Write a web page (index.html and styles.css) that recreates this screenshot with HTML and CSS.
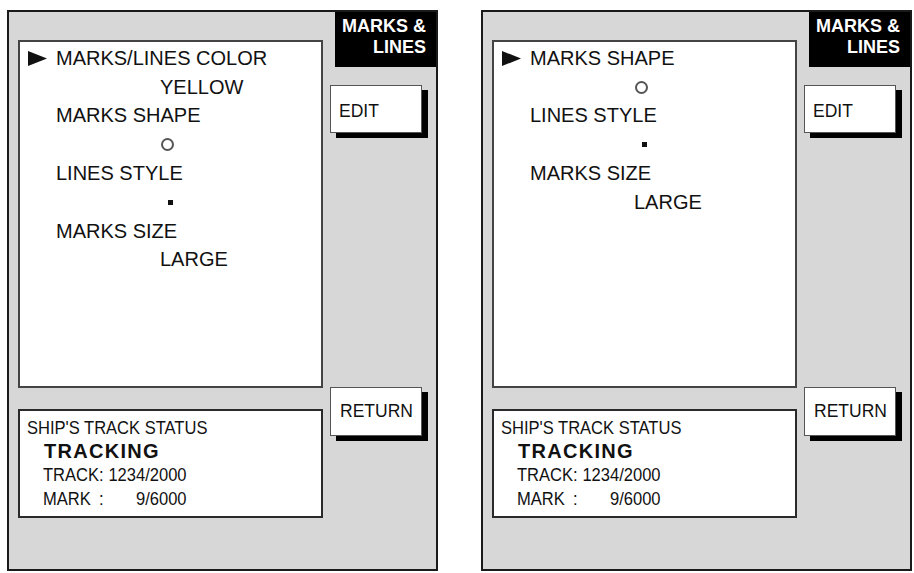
FILE: index.html
```html
<!DOCTYPE html>
<html lang="en">
<head>
  <meta charset="UTF-8">
  <title>Marks &amp; Lines</title>
  <link rel="stylesheet" href="styles.css">
</head>
<body>
  <div class="screens">

    <section class="panel">
      <div class="main">
        <div class="menu">
          <div class="row current">
            <span class="mark"><svg width="19" height="15" viewBox="0 0 19 15"><polygon points="0,0 19,7.5 0,15" fill="#111"/></svg></span>
            MARKS/LINES COLOR
          </div>
          <div class="row value">YELLOW</div>
          <div class="row">MARKS SHAPE</div>
          <div class="row value-ring"><span class="ring"></span></div>
          <div class="row">LINES STYLE</div>
          <div class="row value-dot"><span class="dot"></span></div>
          <div class="row">MARKS SIZE</div>
          <div class="row value">LARGE</div>
        </div>
        <div class="status">
          <div class="status-title">SHIP'S TRACK STATUS</div>
          <div class="status-state">TRACKING</div>
          <div class="counts">
            <span>TRACK</span><span>:</span><span class="num">1234/2000</span>
            <span>MARK</span><span>:</span><span class="num">9/6000</span>
          </div>
        </div>
      </div>
      <div class="side">
        <div class="title">MARKS &amp;<br>LINES</div>
        <div class="key edit">EDIT</div>
        <div class="key return">RETURN</div>
      </div>
    </section>

    <section class="panel">
      <div class="main">
        <div class="menu">
          <div class="row current">
            <span class="mark"><svg width="19" height="15" viewBox="0 0 19 15"><polygon points="0,0 19,7.5 0,15" fill="#111"/></svg></span>
            MARKS SHAPE
          </div>
          <div class="row value-ring"><span class="ring"></span></div>
          <div class="row">LINES STYLE</div>
          <div class="row value-dot"><span class="dot"></span></div>
          <div class="row">MARKS SIZE</div>
          <div class="row value">LARGE</div>
        </div>
        <div class="status">
          <div class="status-title">SHIP'S TRACK STATUS</div>
          <div class="status-state">TRACKING</div>
          <div class="counts">
            <span>TRACK</span><span>:</span><span class="num">1234/2000</span>
            <span>MARK</span><span>:</span><span class="num">9/6000</span>
          </div>
        </div>
      </div>
      <div class="side">
        <div class="title">MARKS &amp;<br>LINES</div>
        <div class="key edit">EDIT</div>
        <div class="key return">RETURN</div>
      </div>
    </section>

  </div>
</body>
</html>
```

FILE: styles.css
```css
body {
  margin: 0;
  background-color: #fff;
  font-family: 'Liberation Sans', Arial, sans-serif;
  color: #111;
}

.screens {
  display: flex;
  gap: 43px;
  padding: 10px 0 0 7px;
}

.panel {
  box-sizing: border-box;
  width: 431px;
  height: 561px;
  display: flex;
  background-color: #d7d7d7;
  border: 2px solid #1a1a1a;
}

.main {
  width: 321px;
  padding-left: 9px;
  box-sizing: border-box;
}

.menu {
  box-sizing: border-box;
  width: 305px;
  height: 348px;
  margin-top: 28px;
  padding-top: 2px;
  background-color: #fff;
  border: 2px solid #444;
  font-size: 20px;
}

.row {
  display: flex;
  align-items: center;
  height: 28.8px;
  padding-left: 36px;
}

.row.current {
  padding-left: 8px;
}

.mark {
  flex: none;
  width: 28px;
  display: flex;
  align-items: center;
}

.row.value {
  padding-left: 140px;
}

.row.value-ring {
  padding-left: 141px;
}

.row.value-dot {
  padding-left: 148px;
}

.ring {
  width: 9px;
  height: 9px;
  border: 2px solid #555;
  border-radius: 50%;
}

.dot {
  width: 5px;
  height: 5px;
  background-color: #111;
}

.status {
  box-sizing: border-box;
  width: 305px;
  margin-top: 21px;
  padding: 5px 7px 5px 7px;
  background-color: #fff;
  border: 2px solid #2a2a2a;
  font-size: 19px;
  line-height: 23.7px;
}

.status-title {
  transform: scaleX(0.87);
  transform-origin: left;
  white-space: nowrap;
}

.status-state {
  margin-left: 17px;
  font-size: 20px;
  font-weight: bold;
  letter-spacing: 1.3px;
}

.counts {
  display: grid;
  grid-template-columns: auto auto 1fr;
  width: 165px;
  margin-left: 16px;
  transform: scaleX(0.87);
  transform-origin: left;
}

.counts .num {
  text-align: right;
}

.side {
  flex: 1;
}

.title {
  box-sizing: border-box;
  height: 55px;
  margin-left: 5px;
  padding: 4px 10px 0 0;
  background-color: #000;
  color: #fff;
  font-size: 18px;
  font-weight: bold;
  line-height: 21px;
  text-align: right;
}

.key {
  box-sizing: border-box;
  width: 92px;
  background-color: #fff;
  border: 1px solid #555;
  box-shadow: 6px 5px 0 #000;
  font-size: 17.5px;
}

.edit {
  height: 48px;
  margin-top: 18px;
  padding: 15px 0 0 8px;
}

.return {
  height: 49px;
  margin-top: 254px;
  padding: 13px 0 0 9px;
}
```
